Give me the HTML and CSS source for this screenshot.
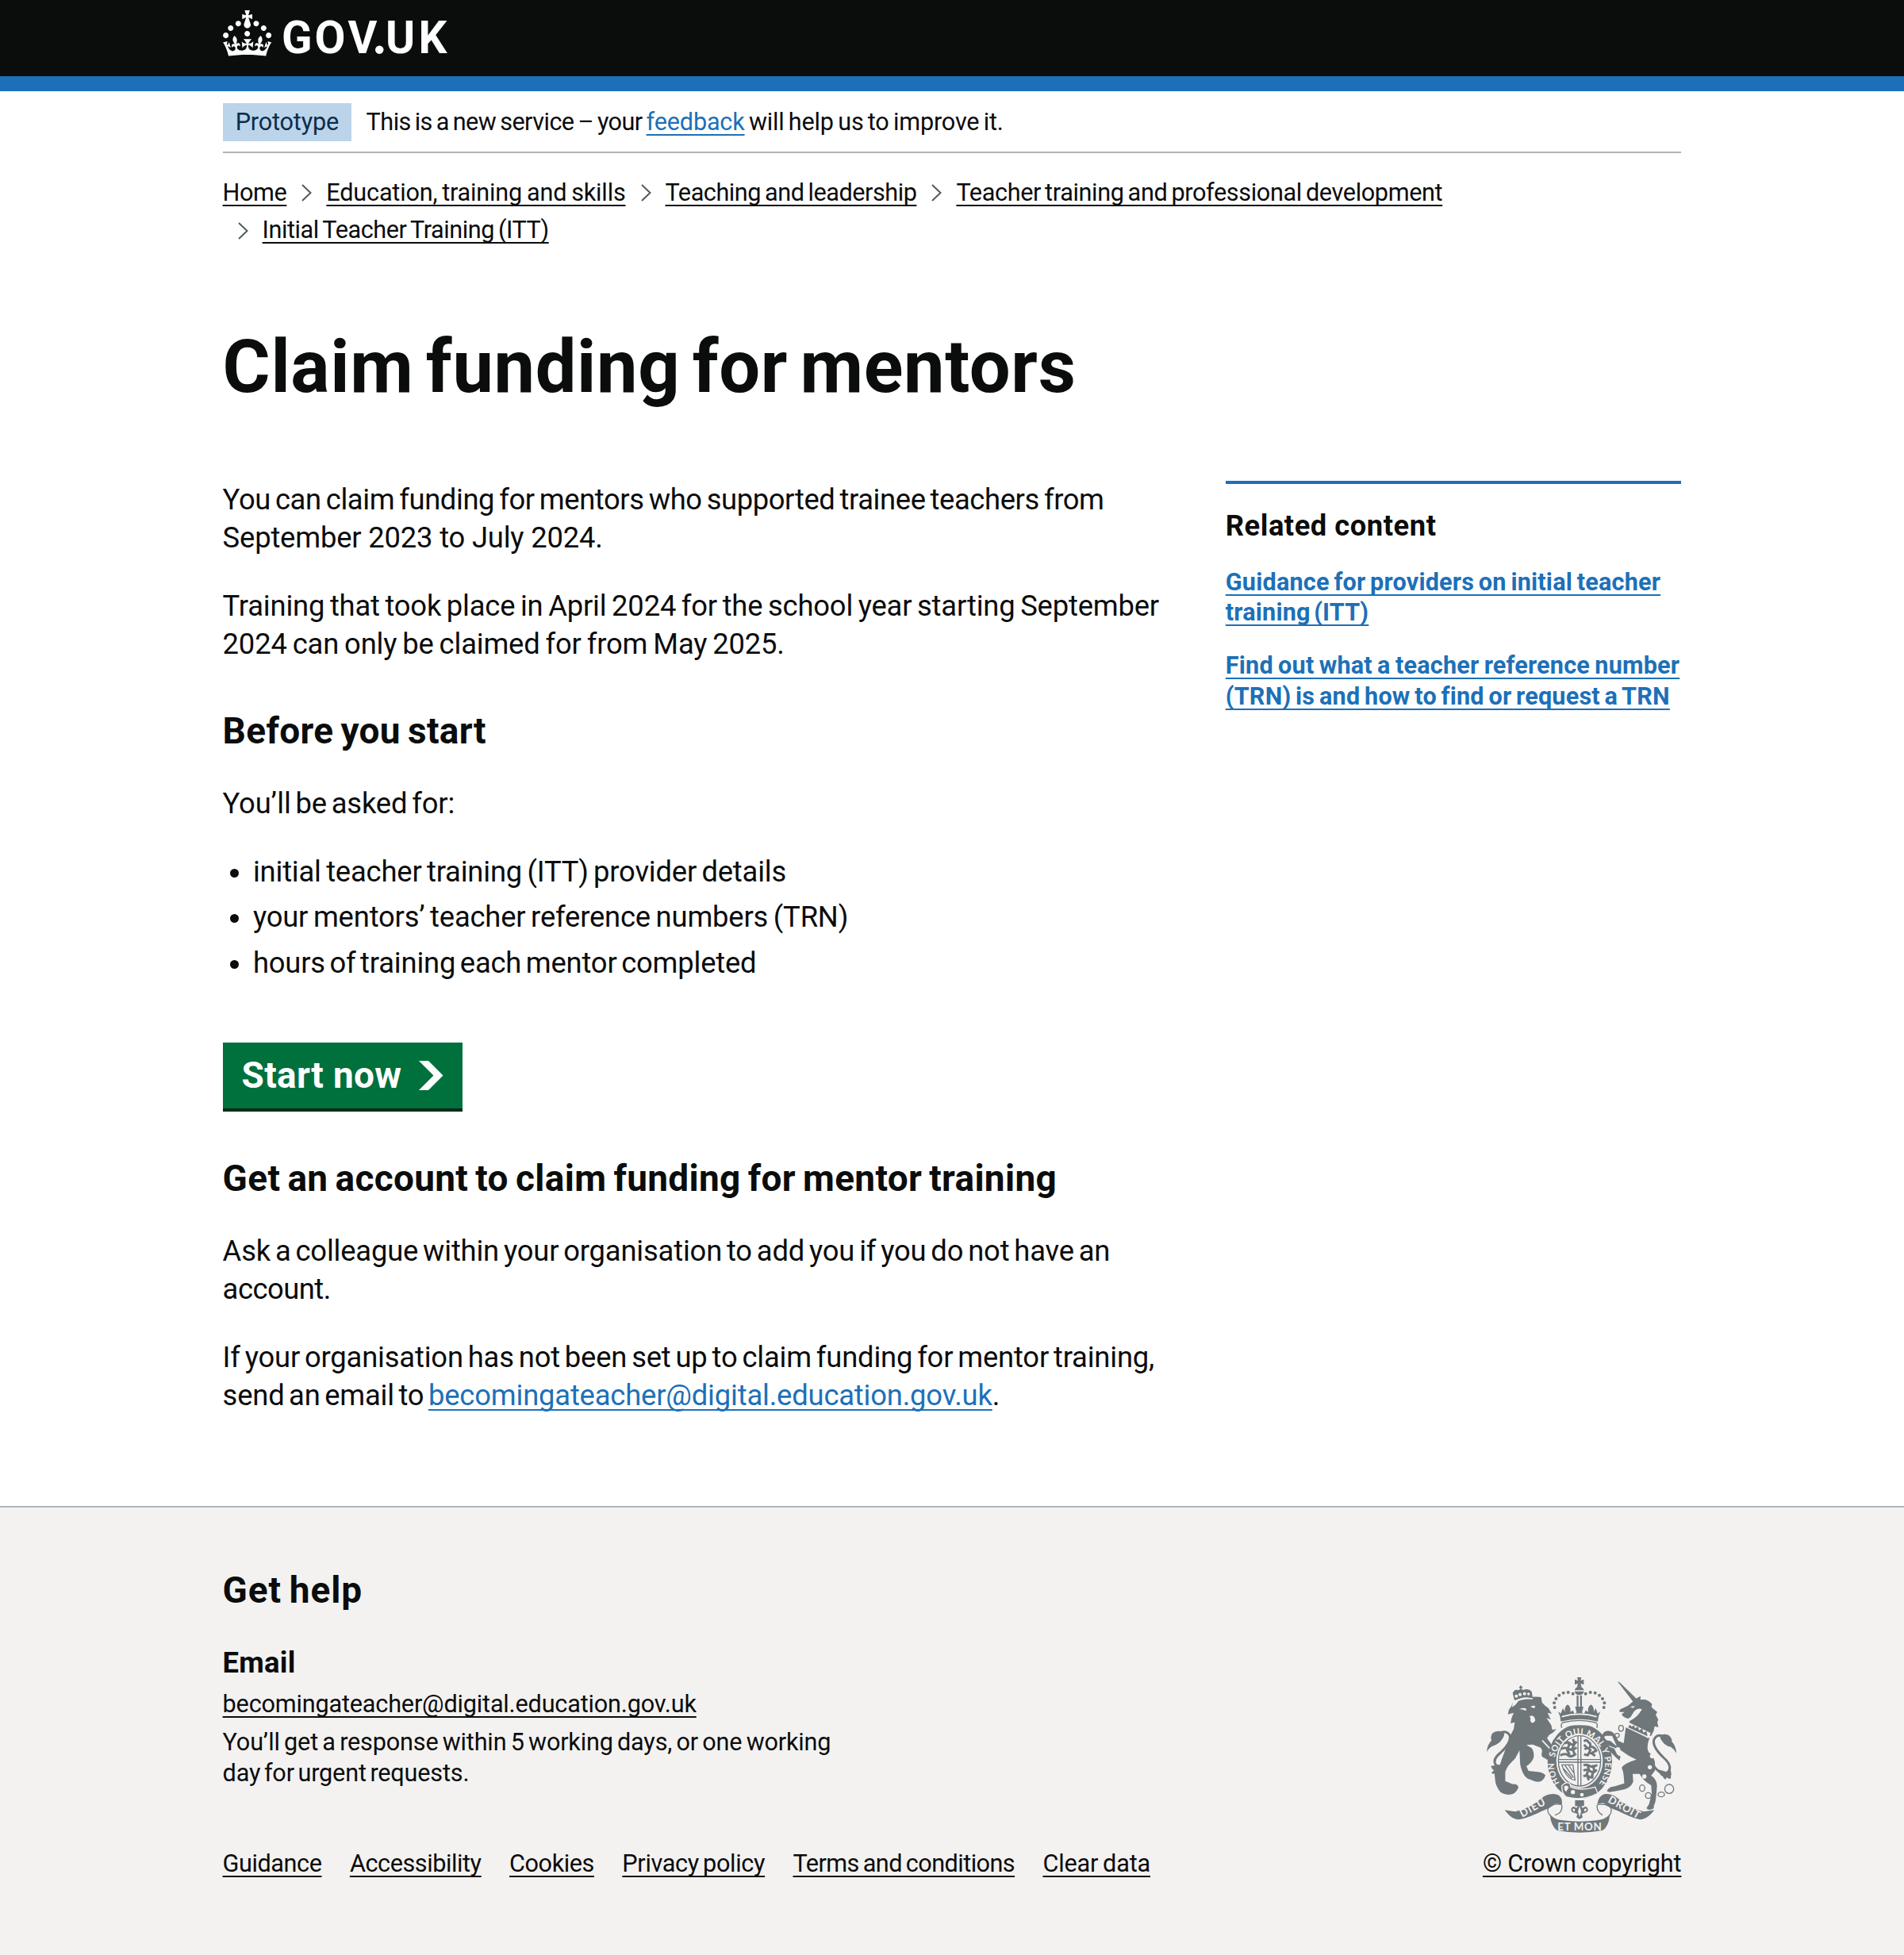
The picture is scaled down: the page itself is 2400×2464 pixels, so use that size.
FILE: index.html
```html
<!DOCTYPE html>
<html lang="en">
<head>
<meta charset="utf-8">
<title>Claim funding for mentors - GOV.UK</title>
<link rel="stylesheet" href="styles.css">
</head>
<body>
<header class="header">
  <div class="container">
    <svg class="header-logo" viewBox="0 0 290 58" role="img" aria-label="GOV.UK">
      <path transform="scale(1.9154)" d="M22.6 10.4c-1 .4-2-.1-2.4-1-.4-.9.1-2 1-2.4.9-.4 2 .1 2.4 1s-.1 2-1 2.4m-5.9 6.7c-.9.4-2-.1-2.4-1-.4-.9.1-2 1-2.4.9-.4 2 .1 2.4 1s-.1 2-1 2.4m10.8-3.7c-1 .4-2-.1-2.4-1-.4-.9.1-2 1-2.4.9-.4 2 .1 2.4 1s0 2-1 2.4m3.3 4.8c-1 .4-2-.1-2.4-1-.4-.9.1-2 1-2.4.9-.4 2 .1 2.4 1s-.1 2-1 2.4M17 4.7l2.3 1.2V2.5l-2.3.7-.2-.2.9-3h-3.4l.9 3-.2.2c-.1.1-2.3-.7-2.3-.7v3.4L15 4.7c.1.1.1.2.2.2l-1.3 4c-.1.2-.1.4-.1.6 0 1.1.8 2 1.9 2.2h.7c1-.2 1.9-1.1 1.9-2.1 0-.2 0-.4-.1-.6l-1.3-4c-.1-.2 0-.2.1-.3m-7.6 5.7c.9.4 2-.1 2.4-1 .4-.9-.1-2-1-2.4-.9-.4-2 .1-2.4 1s0 2 1 2.4m-5 3c.9.4 2-.1 2.4-1 .4-.9-.1-2-1-2.4-.9-.4-2 .1-2.4 1s.1 2 1 2.4m-3.2 4.8c.9.4 2-.1 2.4-1 .4-.9-.1-2-1-2.4-.9-.4-2 .1-2.4 1s0 2 1 2.4m14.8 11c4.4 0 8.6.3 12.3.8 1.1-4.5 2.4-7 3.7-8.8l-2.5-.9c.2 1.3.3 1.9 0 2.7-.4-.4-.8-1.1-1.1-2.3l-1.2 4c.7-.5 1.3-.8 2-.9-1.1 2.5-2.6 3.1-3.5 3-1.1-.2-1.7-1.2-1.5-2.1.3-1.2 1.5-1.5 2.1-.1 1.1-2.3-.8-3-2-2.3 1.9-1.9 2.1-3.5.6-5.6-2.1 1.6-2.1 3.2-1.2 5.5-1.2-1.4-3.2-.6-2.5 1.6.9-1.4 2.1-.5 1.9.8-.2 1.1-1.7 2.1-3.5 1.9-2.7-.2-2.9-2.1-2.9-3.6.7-.1 1.9.5 2.9 1.9l.4-4.3c-1.1 1.1-2.1 1.4-3.2 1.4.4-1.2 2.1-3 2.1-3h-5.4s1.7 1.9 2.1 3c-1.1 0-2.1-.2-3.2-1.4l.4 4.3c1-1.4 2.2-2 2.9-1.9-.1 1.5-.2 3.4-2.9 3.6-1.9.2-3.4-.8-3.5-1.9-.2-1.3 1-2.2 1.9-.8.7-2.3-1.2-3-2.5-1.6.9-2.2.9-3.9-1.2-5.5-1.5 2-1.3 3.7.6 5.6-1.2-.7-3.1 0-2 2.3.6-1.4 1.8-1.1 2.1.1.2.9-.3 1.9-1.5 2.1-.9.2-2.4-.5-3.5-3 .6 0 1.2.3 2 .9l-1.2-4c-.3 1.1-.7 1.9-1.1 2.3-.3-.8-.2-1.4 0-2.7l-2.9.9C1.3 23 2.6 25.5 3.7 30c3.7-.5 7.9-.8 12.3-.8"/>
      <text class="header-wordmark" y="54" x="74 115.5 157.5 189 205 246.5">GOV.UK</text>
      <circle cx="197.3" cy="49.6" r="5.2"/>
    </svg>
  </div>
</header>
<div class="header-bar"></div>

<div class="container">
  <div class="phase-banner">
    <strong class="tag">Prototype</strong>
    <span class="phase-text"><span class="tight-18">This is a new service – your </span><a href="#" class="link">feedback</a><span class="ws-7"> will help us to improve it.</span></span>
  </div>
  <nav class="breadcrumbs">
    <ol class="breadcrumb-list">
      <li class="crumb"><a href="#" class="crumb-link snug">Home</a></li>
      <li class="crumb"><svg class="chevron" viewBox="0 0 13 22"><path d="M1 1l10.5 10L1 21"/></svg><a href="#" class="crumb-link ws-5">Education, training and skills</a></li>
      <li class="crumb"><svg class="chevron" viewBox="0 0 13 22"><path d="M1 1l10.5 10L1 21"/></svg><a href="#" class="crumb-link tight-15">Teaching and leadership</a></li>
      <li class="crumb"><svg class="chevron" viewBox="0 0 13 22"><path d="M1 1l10.5 10L1 21"/></svg><a href="#" class="crumb-link tight-12">Teacher training and professional development</a></li>
      <li class="crumb"><svg class="chevron" viewBox="0 0 13 22"><path d="M1 1l10.5 10L1 21"/></svg><a href="#" class="crumb-link tight-14">Initial Teacher Training (ITT)</a></li>
    </ol>
  </nav>

  <main class="main">
    <h1 class="heading-xl">Claim funding for mentors</h1>
    <div class="columns">
      <div class="content">
        <p class="body"><span class="tight-11">You can claim funding for mentors who supported trainee teachers from</span> <span class="ws-0">September 2023 to July 2024.</span></p>
        <p class="body ws-6">Training that took place in April 2024 for the school year starting September <span class="ws-5">2024 can only be claimed for from May 2025.</span></p>
        <h2 class="heading-m">Before you start</h2>
        <p class="body">You’ll be asked for:</p>
        <ul class="list">
          <li class="ws-7">initial teacher training (ITT) provider details</li>
          <li class="ws-6">your mentors’ teacher reference numbers (TRN)</li>
          <li class="ws-9">hours of training each mentor completed</li>
        </ul>
        <a href="#" class="start-button">Start now<svg class="start-icon" viewBox="0 0 33 40"><path d="M0 0h13l20 20-20 20H0l20-20z"/></svg></a>
        <h2 class="heading-m">Get an account to claim funding for mentor training</h2>
        <p class="body">Ask a colleague within your organisation to add you if you do not have an <span class="snug">account.</span></p>
        <p class="body">If your organisation has not been set up to claim funding for mentor training, <span class="ws-9">send an email to </span><a href="#" class="link">becomingateacher@digital.education.gov.uk</a>.</p>
      </div>
      <aside class="related">
        <h2 class="heading-s wide">Related content</h2>
        <a href="#" class="related-link"><span class="ws-7">Guidance for providers on initial teacher</span> <span class="ws-11">training (ITT)</span></a>
        <a href="#" class="related-link"><span class="ws-5">Find out what a teacher reference number</span> <span class="ws-7">(TRN) is and how to find or request a TRN</span></a>
      </aside>
    </div>
  </main>
</div>

<footer class="footer">
  <div class="container footer-inner">
    <div class="footer-main">
      <h2 class="heading-m wider">Get help</h2>
      <h3 class="heading-s footer-subheading">Email</h3>
      <p class="footer-line"><a href="#" class="footer-link">becomingateacher@digital.education.gov.uk</a></p>
      <p class="footer-text ws-7">You’ll get a response within 5 working days, or one working<br><span class="ws-9">day for urgent requests.</span></p>
      <nav class="footer-nav">
        <a href="#" class="footer-link snug">Guidance</a>
        <a href="#" class="footer-link snug">Accessibility</a>
        <a href="#" class="footer-link snug">Cookies</a>
        <a href="#" class="footer-link tight-11">Privacy policy</a>
        <a href="#" class="footer-link tight-18">Terms and conditions</a>
        <a href="#" class="footer-link ws-5">Clear data</a>
      </nav>
    </div>
    <div class="copyright">
      <svg class="crest" viewBox="72 75 718 588" aria-hidden="true">
        <!-- lion -->
        <g class="ink">
          <path d="M168 188l14-10 10-14q44-20 86-14l3 20q10 12 24 21l13 22-16-4 12 26-16-6 18 27 4 18 16-3-14 13-14 9-8 12 14 20 14 28 6 34q-14 2-20-4-12 8-22-2-16-4-12-20 4-10-4-20l-30-12-24 2 20 12q10 14 8 34-8 22-28 34l8 18 36 4q18 2 28 12-4 16-18 24-20 4-36-6-20-4-30-24-12-26-12-44l-2-44-16 30q-30 26-38 52l0 34 28 12q18-2 22 12-8 20-24 26-24 6-44-8-18-22-20-44l-4-40 20-14q10-30 18-50l10-30 12-34 14-26 4-26-16 4 4-20 8-20-22 6 4-18 10-14 4-14z"/>
          <path d="M176 160l-6-26q8-16 22-10l8-6-6-4 6-9 8 9-6 5 8 4q20-8 32 6l4 24q-36-8-64 9z"/>
          <path class="line thick" d="M178 376q-46 54-72 30-14-20 18-46 40-36 36-62-8-22-34-15"/>
          <path d="M72 358q2-30 18-44-6-12 4-28 18-14 44-3 2 14-8 26-12 20-36 26-14 6-22 23zM88 410q4 14 12 16-8 6-10 12 12 4 20-2 2 6 10 8 4-18 18-28l18-24-28 12z"/>
        </g>
        <g class="paper">
          <path d="M194 196q14-8 28-2l-2 8q-14-8-26-6zM238 186q10-6 18-2l-4 8q-8-2-14-6zM234 222l10-2 8 6 4 12q-6 12-16 8-6-8-2-14z"/>
          <circle cx="184" cy="146" r="6"/><circle cx="198" cy="140" r="6"/><circle cx="215" cy="137" r="6"/><circle cx="230" cy="138" r="5"/>
        </g>
        <path class="paper-line" d="M178 166q32-14 68-10M282 314l36 38"/>
        <!-- unicorn -->
        <g class="ink">
          <path d="M566 90l10 5 68 66-14 12z"/>
          <path d="M578 196l28-14 36-30 12-6-1 14q26-6 44 16l-2 12 22 18-6 10 10 20-4 8 4 20-14-4-4 18-10 20q-34-18-84-48l4-10q30-14 46-44-16-8-30 8l-12 20-10 8-10-4q-14-6-14-14l10-8-18 0q-4-4 3-10z"/>
          <path d="M598 264l90 40q-14 34-4 54 30 18 24 70l-14 18q22 16 22 40l-4 44q-2 20-8 30 2 12-8 14-12 6-20-4l10-16 10-40-2-30q-30-18-44-44l-26 0 2 30q-10 26-48 32l-34 6q-12 4-18-4 10-16 26-16l40-12q-2-50-10-58 8-18 56-32-30-12-58-34l-48-20-18 12-12-4 18-28 20 4 24 20-18-40-24 0-12 8q-4-14 6-22 20-10 36 4l18 30 20 8z"/>
          <path d="M524 334l30 10 12 24 12 6-4 16-16-14-26-28-12-8z"/>
          <path class="line thick" d="M704 412q40 46 56 18 14-22-20-52-42-40-36-66 10-24 32-14"/>
          <path d="M790 362q-4-30-18-44 2-12-12-24-20-8-34 2 2 14 12 24 10 14 30 18 12 8 22 24zM722 424q2 20 16 26 2 8 10 12 2-8 6-8 6 6 14 4 0-12 2-16l-2-16-18 6z"/>
          <g class="line"><ellipse cx="580" cy="268" rx="9" ry="11"/><circle cx="565" cy="295" r="8"/><ellipse cx="660" cy="494" rx="10" ry="12"/><circle cx="683" cy="522" r="11"/><ellipse cx="732" cy="518" rx="12" ry="9"/><circle cx="762" cy="497" r="17"/></g>
        </g>
        <g class="paper">
          <circle cx="568" cy="348" r="9"/><circle cx="698" cy="373" r="9"/><circle cx="689" cy="415" r="8"/><circle cx="668" cy="450" r="8"/>
          <path d="M614 187l18-4-6 8zM606 244l86 42-8 20-86-42z"/>
        </g>
        <path class="ink" d="M606 264l8-10 6 8 10-6 2 12 12-6 4 14 12-8 4 16 12-6 4 20z"/>
        <!-- garter and shield -->
        <ellipse class="ink" cx="424" cy="393" rx="122" ry="141"/>
        <ellipse class="paper" cx="423" cy="391" rx="88" ry="103"/>
        <ellipse class="line" cx="423" cy="391" rx="80" ry="95"/>
        <path class="line" d="M417 298v188M428 298v188M342 386h162M342 396h162"/>
        <g class="squiggle">
          <path d="M366 326q12-10 22 0t24-8M354 346q14-8 28 0t30-6M350 370q20-10 30 0t30-6M376 318l8 12-8 20 10 18M398 308l6 18-8 18 10 26"/>
          <path d="M440 318q10-12 16 2 12 6 6 18 16-2 24 14l-18 10 14 10M442 348q12-12 22 2l-10 20-14-4M440 330l10 10"/>
          <path d="M438 408q12-6 24 2t28-4M438 428q14-8 26 2t24-6M438 450q12-8 20 0t16-6M452 404l6 18-8 20 8 22M474 406l4 20-8 20 2 12"/>
        </g>
        <path class="line" d="M356 406h42l8 58q-34-6-50-58zM368 408l32 46M382 408l20 30M362 420l32 36"/>
        <path id="garter" fill="none" d="M350 478A96 113 0 1 1 490 486"/>
        <text class="garter-text"><textPath href="#garter" textLength="480" startOffset="4">HON&#160; SOIT QUI MAL Y PENSE</textPath></text>
        <path class="ink outlined" d="M356 486q14-18 30-10l4 14q36 16 92 0l10 24q-60 30-118 14-18-10-18-42z"/>
        <g class="paper"><circle cx="398" cy="509" r="8"/><circle cx="432" cy="519" r="7"/><path d="M366 486q12-4 16 6l-10 16q-10-8-6-22z"/></g>
        <!-- crown -->
        <path class="paper" d="M342 246h162v22q-80-24-162 0z"/>
        <g class="ink">
          <path d="M414 75h16l-3 13 12-5v20l-12-5 4 12h-18l4-12-12 5V83l12 5zM404 124q4-14 18-14t18 14zM404 128h36q-4 14-18 14t-18-14z"/>
          <path d="M412 144h7v44h-7zM425 144h7v44h-7z"/>
          <path d="M342 204l10 8 8-20 8 14q-4-18 10-28 14 10 10 28l10-6 6 14 8-6-6-22h32l-6 22 8 6 6-14 10 6q-4-18 10-28 14 10 10 28l8-14 8 20 10-8q-10 20-10 38-68-18-140 0 0-18-10-38z"/>
          <circle cx="398" cy="137" r="6"/><circle cx="380" cy="132" r="6"/><circle cx="362" cy="134" r="6"/><circle cx="346" cy="143" r="6"/><circle cx="334" cy="156" r="6"/><circle cx="327" cy="172" r="6"/><circle cx="329" cy="189" r="6"/>
          <circle cx="446" cy="137" r="6"/><circle cx="464" cy="132" r="6"/><circle cx="482" cy="134" r="6"/><circle cx="498" cy="143" r="6"/><circle cx="510" cy="156" r="6"/><circle cx="517" cy="172" r="6"/><circle cx="515" cy="189" r="6"/>
        </g>
        <path class="line" d="M356 266q-6-14 4-20 62-16 124 0 10 6 4 20"/>
        <path class="paper-line" d="M356 224q66-20 132 0"/>
        <!-- motto scroll -->
        <path class="ink" d="M140 577l40 6q60-14 96-48 30-26 64-16 20 8 16 38-12-6-26-4-14 16-50 28-56 28-88 32-26 0-52-36z"/>
        <path class="ink" d="M706 577l-40 6q-60-14-96-48-26-24-54-18-22 8-26 38 12-6 26-4 14 16 50 28 56 28 86 34 26 0 54-36z"/>
        <path class="line" d="M356 556q-36-6-52 14-4 20 10 28M356 558q4 30-26 38M490 556q42-4 52 14 4 20-8 28M490 558q-4 24 20 38"/>
        <path class="ink" d="M310 592q16 22 50 24 62 8 128 0 36-4 50-24-4 48-28 62-88 16-172 0-22-14-28-62z"/>
        <text class="motto" transform="translate(206 605) rotate(-29)" textLength="104">DIEU</text>
        <text class="motto" x="340" y="654" textLength="166">ET MON</text>
        <text class="motto" transform="translate(528 546) rotate(29)" textLength="132">DROIT</text>
        <path class="ink" d="M406 540h34v22h-34zM423 552l12 18q14-14 20 4 0 12-14 14l-10 4 4 12-12 8-12-8 4-12-10-4q-14-2-14-14 6-18 20-4z"/>
        <path class="paper" d="M423 562l6 20-6 22-6-22zM396 574q8-6 10 4l-4 6zM450 574q-8-6-10 4l4 6z"/>
      </svg>
      <a href="#" class="footer-link">© Crown copyright</a>
    </div>
  </div>
</footer>
</body>
</html>
```
FILE: styles.css
```css
/* 1rem = 10 design units */
html { font-size: 19.154px; }
body {
  margin: 0;
  background: #fff;
  color: #0b0c0c;
  font-family: Roboto, "Liberation Sans", sans-serif;
}
h1, h2, h3, p, ol, ul { margin: 0; padding: 0; }

.container { width: 96rem; margin: 0 auto; }

.header { height: 96px; background: #0b0c0c; }
.header-logo { display: block; width: 290px; height: 58px; padding-top: 13px; fill: #fff; overflow: visible; }
.header-wordmark { font-size: 56.5px; font-weight: 700; letter-spacing: 0; }
.header-bar { height: 19px; background: #1d70b8; }

.link { color: #1d70b8; }
.link, .crumb-link, .related-link, .footer-link {
  text-decoration-line: underline;
  text-decoration-thickness: 2px;
  text-underline-offset: 0.15em;
  text-decoration-skip-ink: none;
}

.phase-banner {
  display: flex;
  align-items: flex-start;
  gap: 18.5px;
  height: 61px;
  padding-top: 15px;
  border-bottom: 2px solid #b1b4b6;
  font-size: 1.6rem;
  line-height: 48px;
  letter-spacing: -0.006em;
}
.tag {
  padding: 0 0.84rem;
  background: #bbd4ea;
  color: #0c2d4a;
  font-weight: 400;
}

.breadcrumbs { padding-top: 30.5px; font-size: 1.6rem; line-height: 2rem; letter-spacing: -0.006em; }
.breadcrumb-list { display: flex; flex-wrap: wrap; list-style: none; }
.crumb { display: flex; align-items: center; margin-bottom: 0.5rem; }
.crumb-link { color: inherit; }
.chevron { width: 13px; height: 22px; margin: 0 18px 0 19px; fill: none; stroke: #505a5f; stroke-width: 2; }

.main { padding-top: 5rem; }
.heading-xl, .heading-m, .heading-s, .related-link, .start-button { font-weight: 700; letter-spacing: 0.007em; }
.heading-xl { margin-bottom: 4.96rem; font-size: 4.8rem; line-height: 5rem; word-spacing: -0.088em; }
.columns { display: flex; justify-content: space-between; align-items: flex-start; }
.content { width: 63rem; }

.body, .list { margin-bottom: 2rem; font-size: 1.9rem; line-height: 2.5rem; letter-spacing: -0.005em; word-spacing: -0.08em; }
.heading-m { margin-bottom: 2rem; font-size: 2.4rem; line-height: 3rem; word-spacing: -0.057em; }
.content .heading-m { padding-top: 1rem; }
.list { padding-left: 2rem; }
.list li { margin-bottom: 0.5rem; }

.start-button {
  display: flex;
  align-items: center;
  box-sizing: border-box;
  width: 302px;
  height: 83px;
  margin: 76px 0 41px;
  padding: 0 24px;
  background: #00703c;
  box-shadow: 0 4px 0 #002d18;
  color: #fff;
  font-size: 2.4rem;
  text-decoration: none;
}
.start-icon { width: 30.5px; height: 37px; margin-left: auto; fill: #fff; }

.related {
  display: flex;
  flex-direction: column;
  gap: 1.5rem;
  width: 30rem;
  padding-top: 1.5rem;
  border-top: 4px solid #1d70b8;
}
.heading-s { font-size: 1.9rem; line-height: 2.5rem; }
.related-link { color: #1d70b8; font-size: 1.6rem; line-height: 2rem; letter-spacing: 0.006em; }

/* Tracking and word gap adjustments */
.snug { letter-spacing: -0.014em; }
.wide { letter-spacing: 0.014em; }
.wider { letter-spacing: 0.02em; }
.ws-0 { word-spacing: 0; }
.ws-5 { word-spacing: -0.05em; }
.ws-6 { word-spacing: -0.06em; }
.ws-7 { word-spacing: -0.068em; }
.ws-9 { word-spacing: -0.09em; }
.ws-11 { word-spacing: -0.11em; }
.tight-11, .tight-12, .tight-14, .tight-15, .tight-18 { word-spacing: -0.07em; }
.tight-11 { letter-spacing: -0.011em; }
.tight-12 { letter-spacing: -0.012em; }
.tight-14 { letter-spacing: -0.014em; }
.tight-15 { letter-spacing: -0.015em; }
.tight-18 { letter-spacing: -0.018em; }

.footer { margin-top: 4rem; padding: 4rem 0 5rem; border-top: 2px solid #b1b4b6; background: #f3f2f1; }
.footer-inner { display: flex; justify-content: space-between; align-items: flex-end; }
.footer-subheading { margin-bottom: 0.5rem; }
.footer-line, .footer-text, .footer-nav, .copyright { font-size: 1.6rem; line-height: 2rem; letter-spacing: -0.006em; }
.footer-line { margin-bottom: 0.5rem; }
.footer-text { margin-bottom: 4rem; }
.footer-nav { display: flex; gap: 35.4px; }
.footer-link { color: inherit; }

.copyright { display: flex; flex-direction: column; align-items: center; gap: 20px; }
.crest { display: block; width: 239.4px; height: 196px; }
.ink { fill: #6f777b; }
.paper { fill: #f3f2f1; }
.line { fill: none; stroke: #6f777b; stroke-width: 4; }
.thick { stroke-width: 9; }
.paper-line { fill: none; stroke: #f3f2f1; stroke-width: 5; }
.outlined { stroke: #f3f2f1; stroke-width: 4; }
.squiggle { fill: none; stroke: #6f777b; stroke-width: 9; }
.garter-text, .motto { fill: #f3f2f1; font-family: Lato, sans-serif; font-weight: 700; letter-spacing: 0; }
.garter-text { font-size: 33px; }
.motto { font-size: 40px; }
```
